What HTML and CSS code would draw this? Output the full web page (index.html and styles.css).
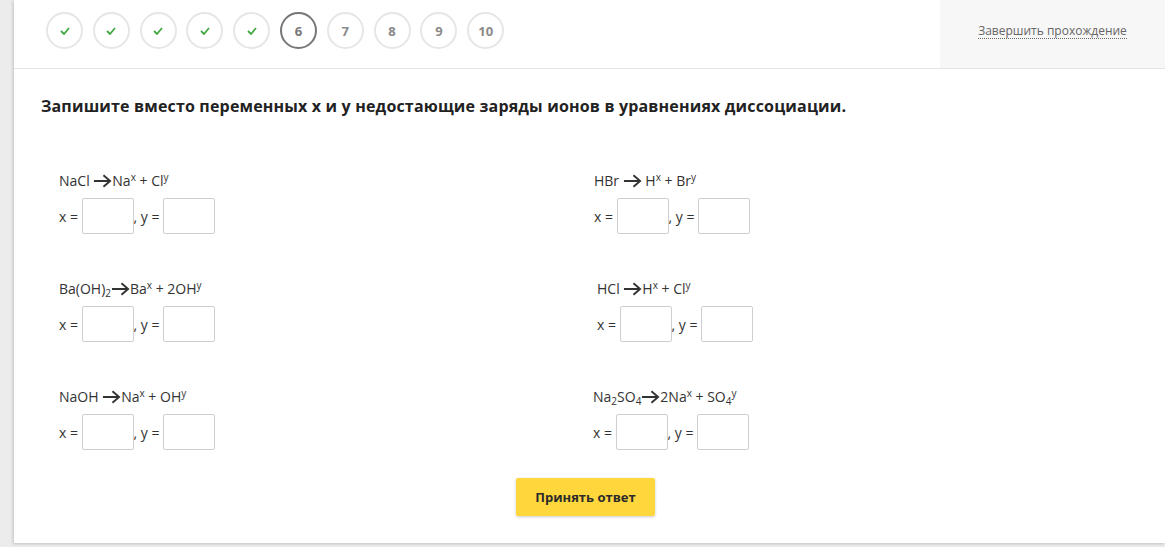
FILE: index.html
```html
<!DOCTYPE html>
<html lang="ru">
<head>
<meta charset="utf-8">
<title>Тест</title>
<link rel="stylesheet" href="styles.css">
</head>
<body>
<div class="card">
  <header class="header">
    <div class="steps">
      <div class="step done"><svg viewBox="0 0 10 8" width="10" height="8"><polyline points="1,4 4,7 9,1" fill="none" stroke="#43a843" stroke-width="1.8"/></svg></div>
      <div class="step done"><svg viewBox="0 0 10 8" width="10" height="8"><polyline points="1,4 4,7 9,1" fill="none" stroke="#43a843" stroke-width="1.8"/></svg></div>
      <div class="step done"><svg viewBox="0 0 10 8" width="10" height="8"><polyline points="1,4 4,7 9,1" fill="none" stroke="#43a843" stroke-width="1.8"/></svg></div>
      <div class="step done"><svg viewBox="0 0 10 8" width="10" height="8"><polyline points="1,4 4,7 9,1" fill="none" stroke="#43a843" stroke-width="1.8"/></svg></div>
      <div class="step done"><svg viewBox="0 0 10 8" width="10" height="8"><polyline points="1,4 4,7 9,1" fill="none" stroke="#43a843" stroke-width="1.8"/></svg></div>
      <div class="step active">6</div>
      <div class="step">7</div>
      <div class="step">8</div>
      <div class="step">9</div>
      <div class="step">10</div>
    </div>
    <div class="finish"><span class="finish-link">Завершить прохождение</span></div>
  </header>

  <main class="content">
    <h1 class="title">Запишите вместо переменных x и y недостающие заряды ионов в уравнениях диссоциации.</h1>

    <div class="grid">
      <div class="task">
        <div class="eq">NaCl <svg class="arrow" viewBox="0 0 20 14" width="19" height="14"><path d="M1 7H18M11 1L18 7L11 13" fill="none" stroke="#333" stroke-width="2"/></svg>Na<sup>x</sup> + Cl<sup>y</sup></div>
        <div class="answer">x = <span class="box"></span>, y = <span class="box"></span></div>
      </div>
      <div class="task">
        <div class="eq">HBr <svg class="arrow" viewBox="0 0 20 14" width="19" height="14"><path d="M1 7H18M11 1L18 7L11 13" fill="none" stroke="#333" stroke-width="2"/></svg> H<sup>x</sup> + Br<sup>y</sup></div>
        <div class="answer">x = <span class="box"></span>, y = <span class="box"></span></div>
      </div>
      <div class="task">
        <div class="eq">Ba(OH)<sub>2</sub><svg class="arrow" viewBox="0 0 20 14" width="19" height="14"><path d="M1 7H18M11 1L18 7L11 13" fill="none" stroke="#333" stroke-width="2"/></svg>Ba<sup>x</sup> + 2OH<sup>y</sup></div>
        <div class="answer">x = <span class="box"></span>, y = <span class="box"></span></div>
      </div>
      <div class="task shift">
        <div class="eq">HCl <svg class="arrow" viewBox="0 0 20 14" width="19" height="14"><path d="M1 7H18M11 1L18 7L11 13" fill="none" stroke="#333" stroke-width="2"/></svg>H<sup>x</sup> + Cl<sup>y</sup></div>
        <div class="answer">x = <span class="box"></span>, y = <span class="box"></span></div>
      </div>
      <div class="task">
        <div class="eq">NaOH <svg class="arrow" viewBox="0 0 20 14" width="19" height="14"><path d="M1 7H18M11 1L18 7L11 13" fill="none" stroke="#333" stroke-width="2"/></svg>Na<sup>x</sup> + OH<sup>y</sup></div>
        <div class="answer">x = <span class="box"></span>, y = <span class="box"></span></div>
      </div>
      <div class="task back">
        <div class="eq">Na<sub>2</sub>SO<sub>4</sub><svg class="arrow" viewBox="0 0 20 14" width="19" height="14"><path d="M1 7H18M11 1L18 7L11 13" fill="none" stroke="#333" stroke-width="2"/></svg>2Na<sup>x</sup> + SO<sub>4</sub><sup class="sup-after">y</sup></div>
        <div class="answer">x = <span class="box"></span>, y = <span class="box"></span></div>
      </div>
    </div>

    <div class="actions">
      <button class="submit" type="button">Принять ответ</button>
    </div>
  </main>
</div>
</body>
</html>
```

FILE: styles.css
```css
html, body {
  margin: 0;
  padding: 0;
}

body {
  background: #ececec;
  font-family: "Open Sans", "Liberation Sans", sans-serif;
  color: #333;
  height: 547px;
  overflow: hidden;
}

.card {
  margin-left: 14px;
  height: 543px;
  background: #fff;
  box-shadow: -1px 1px 3px rgba(0, 0, 0, 0.18);
  display: flex;
  flex-direction: column;
}

.header {
  display: flex;
  height: 68px;
  border-bottom: 1px solid #e4e4e4;
  flex-shrink: 0;
}

.steps {
  display: flex;
  align-items: flex-start;
  gap: 9.8px;
  padding: 12px 0 0 32px;
}

.step {
  box-sizing: border-box;
  width: 37px;
  height: 37px;
  border: 2px solid #e6e6e6;
  border-radius: 50%;
  display: flex;
  align-items: center;
  justify-content: center;
  font-size: 13px;
  font-weight: 700;
  color: #8a8a8a;
}

.step.done svg {
  display: block;
}

.step.active {
  border-color: #777;
  color: #777;
}

.finish {
  margin-left: auto;
  width: 225px;
  background: #f7f7f7;
  display: flex;
  align-items: center;
  justify-content: center;
  padding-bottom: 7px;
  box-sizing: border-box;
}

.finish-link {
  font-size: 12px;
  color: #666;
  line-height: 15px;
  border-bottom: 1px dotted #666;
}

.content {
  padding: 26px 27px 0;
}

.title {
  margin: 0;
  font-size: 16px;
  line-height: 22px;
  font-weight: 700;
  letter-spacing: 0.17px;
  color: #222;
}

.grid {
  display: grid;
  grid-template-columns: 535px 1fr;
  row-gap: 46px;
  padding-left: 18px;
  margin-top: 55px;
}

.task {
  display: flex;
  flex-direction: column;
  gap: 8px;
}

.task.shift {
  padding-left: 3px;
}

.task.back {
  margin-left: -1px;
}

.eq {
  font-size: 14px;
  line-height: 18px;
  height: 18px;
  white-space: nowrap;
}

.eq sup {
  font-size: 10px;
  line-height: 0;
  vertical-align: 5px;
}

.eq sub {
  font-size: 10px;
  line-height: 0;
  vertical-align: -3px;
}

.arrow {
  vertical-align: -2px;
}

.answer {
  display: flex;
  align-items: center;
  font-size: 14px;
  height: 36px;
  white-space: pre;
}

.box {
  box-sizing: border-box;
  width: 52px;
  height: 36px;
  border: 1px solid #cfcfcf;
  border-radius: 2px;
  background: #fff;
}

.actions {
  display: flex;
  justify-content: center;
  margin-top: 28px;
  padding-right: 8px;
}

.submit {
  width: 139px;
  height: 38px;
  border: none;
  border-radius: 2px;
  background: #ffd73d;
  box-shadow: 0 1px 3px rgba(0, 0, 0, 0.2);
  font-family: "Open Sans", "Liberation Sans", sans-serif;
  font-size: 13px;
  font-weight: 700;
  color: #2b2b2b;
  cursor: pointer;
}
```
